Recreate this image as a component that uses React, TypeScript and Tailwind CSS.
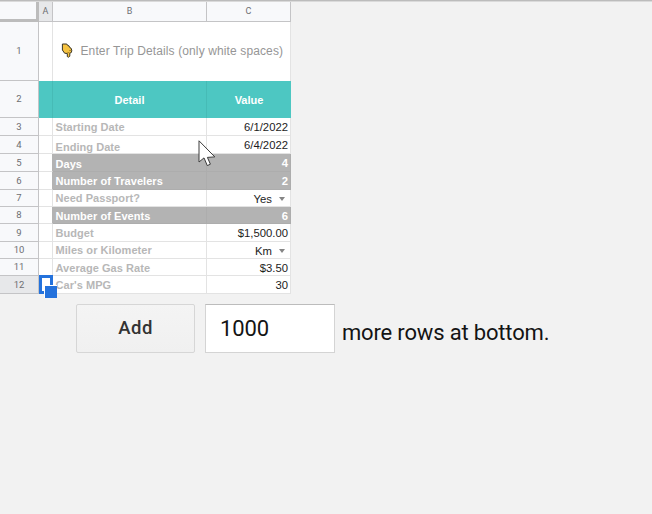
import { clsx } from 'clsx';

type Kind = 'plain' | 'band' | 'select';
interface RowData {
  n: number;
  label: string;
  value: string;
  kind: Kind;
  height: string;
  labelPad?: string;
}

const rows: RowData[] = [
  { n: 3, label: 'Starting Date', value: '6/1/2022', kind: 'plain', height: 'h-[18px]' },
  { n: 4, label: 'Ending Date', value: '6/4/2022', kind: 'plain', height: 'h-[18px]', labelPad: 'pt-[5px]' },
  { n: 5, label: 'Days', value: '4', kind: 'band', height: 'h-[18px]', labelPad: 'pt-[3px]' },
  { n: 6, label: 'Number of Travelers', value: '2', kind: 'band', height: 'h-[18px]' },
  { n: 7, label: 'Need Passport?', value: 'Yes', kind: 'select', height: 'h-[17px]' },
  { n: 8, label: 'Number of Events', value: '6', kind: 'band', height: 'h-[17px]', labelPad: 'pt-[3px]' },
  { n: 9, label: 'Budget', value: '$1,500.00', kind: 'plain', height: 'h-[18px]' },
  { n: 10, label: 'Miles or Kilometer', value: 'Km', kind: 'select', height: 'h-[17px]' },
  { n: 11, label: 'Average Gas Rate', value: '$3.50', kind: 'plain', height: 'h-[17px]', labelPad: 'pt-[2px]' },
  { n: 12, label: "Car's MPG", value: '30', kind: 'plain', height: 'h-[18px]' },
];

function RowNumber({ n, active }: { n: number; active?: boolean }) {
  return (
    <div
      className={clsx(
        'flex w-[39px] shrink-0 items-center justify-center border-r border-b border-[#c4c4c6] text-[9.5px] leading-none text-[#6d6e72]',
        active ? 'bg-[#e7e8ea]' : 'bg-[#f8f9fb]',
      )}
      style={{ fontFamily: 'Roboto, sans-serif' }}
    >
      {n}
    </div>
  );
}

function PointingHand() {
  return (
    <svg width="12" height="16" viewBox="0 0 12 16" className="shrink-0">
      <path
        d="M1.4 1 5.8 1 6.8 2.6 8 2.8 8.6 4.4 9.9 5 10.8 7.2 10.4 9.4 8.8 10.2V13.2L7.6 14.2 6.3 13.6V10.5L3.6 10.2 1.4 7Z"
        fill="#f6c341"
        stroke="#3a3526"
        strokeWidth="1"
        strokeLinejoin="round"
      />
      <path d="M6.4 9.4 8.6 9.8M8.2 7.6 10 7.4" stroke="#8b651d" strokeWidth=".7" fill="none" />
    </svg>
  );
}

function SheetRow({ row }: { row: RowData }) {
  const band = row.kind === 'band';
  return (
    <div className={clsx('flex', row.height)}>
      <RowNumber n={row.n} active={row.n === 12} />
      <div
        className={clsx(
          'relative w-[14px] shrink-0 border-r border-b bg-white',
          band ? 'border-r-[#b3b3b3] border-b-[#e3e3e3]' : 'border-[#e3e3e3]',
        )}
      >
        {row.n === 12 && (
          <>
            <div className="absolute -top-px left-0 h-[19px] w-[14px] border-[3px] border-[#2472dc]" />
            <div className="absolute top-[9px] left-[5px] z-10 h-[13px] w-[13px] border-t border-l border-white bg-[#2472dc]" />
          </>
        )}
      </div>
      <div
        className={clsx(
          'flex w-[154px] shrink-0 items-center border-r border-b pl-[2.5px] text-[11px] leading-none font-bold tracking-[0.05px] whitespace-nowrap',
          row.labelPad ?? 'pt-px',
          band ? 'border-[#adadad] bg-[#b3b3b3] text-white' : 'border-[#e3e3e3] bg-white text-[#b7b7b7]',
        )}
      >
        <span>{row.label}</span>
      </div>
      <div
        className={clsx(
          'flex w-[84px] shrink-0 items-center justify-end border-r border-b pt-[3px] text-[11.3px] leading-none',
          band ? 'border-[#adadad] bg-[#b3b3b3] font-bold text-white' : 'border-[#e3e3e3] bg-white text-[#1c1c1c]',
          row.kind === 'select' ? 'gap-[7px] pr-[5px]' : 'pr-[2px]',
        )}
      >
        <span>{row.value}</span>
        {row.kind === 'select' && (
          <span className="mb-[2px] h-0 w-0 border-x-[3.5px] border-t-4 border-x-transparent border-t-[#858585]" />
        )}
      </div>
    </div>
  );
}

export default function App() {
  return (
    <main
      className="relative h-[514px] w-[652px] overflow-hidden border-t border-[#bcbcbc] bg-[#f2f2f2]"
      style={{ fontFamily: '"Liberation Sans", Arial, sans-serif' }}
    >
      <div className="h-px bg-[#dadada]" />
      <section className="w-[291px]">
        <div className="flex h-5 text-[9px] leading-none text-[#6d6e72]" style={{ fontFamily: 'Roboto, sans-serif' }}>
          <div className="w-[39px] shrink-0 border-r-[3px] border-b-[3px] border-[#bcbcbc] bg-[#f8f9fb]" />
          <div className="flex w-[14px] shrink-0 items-center justify-center border-r border-b border-[#c4c4c6] bg-[#e7e8ea]">A</div>
          <div className="flex w-[154px] shrink-0 items-center justify-center border-r border-b border-[#c4c4c6] bg-[#f8f9fb]">B</div>
          <div className="flex w-[84px] shrink-0 items-center justify-center border-r border-b border-[#c4c4c6] bg-[#f8f9fb]">C</div>
        </div>
        <div className="flex h-[59px]">
          <RowNumber n={1} />
          <div className="w-[14px] shrink-0 border-r border-[#e3e3e3] bg-white" />
          <div className="flex w-[238px] items-center border-r border-[#e3e3e3] bg-white pb-[2px] pl-[8px] text-[12px] text-[#969696]">
            <PointingHand />
            <span className="pl-[7.5px] tracking-[0.12px] whitespace-nowrap">Enter Trip Details (only white spaces)</span>
          </div>
        </div>
        <div className="flex h-[37px] text-[11px] font-bold text-white">
          <div className="flex font-normal">
            <RowNumber n={2} />
          </div>
          <div className="w-[14px] shrink-0 border-r border-[#46bbb6] bg-[#4dc7c2]" />
          <div className="flex w-[154px] shrink-0 items-center justify-center border-r border-[#46bbb6] bg-[#4dc7c2] pt-px">Detail</div>
          <div className="flex w-[84px] shrink-0 items-center justify-center bg-[#4dc7c2] pt-px">Value</div>
        </div>
        {rows.map((row) => (
          <SheetRow key={row.n} row={row} />
        ))}
      </section>
      <div className="flex pt-[10px] pl-[76px]" style={{ fontFamily: 'Roboto, sans-serif' }}>
        <button className="h-[49px] w-[119px] rounded-[2px] border border-[#d6d6d6] bg-linear-to-b from-[#f4f4f4] to-[#f0f0f0] pt-px text-[18.5px] font-medium tracking-[0.5px] text-[#333]">
          Add
        </button>
        <div className="ml-[10px] flex h-[49px] w-[130px] items-center border border-t-[#bcbcbc] border-r-[#d4d4d4] border-b-[#d4d4d4] border-l-[#d4d4d4] bg-white pl-[14px] text-[22px] tracking-[-0.1px] text-[#141414]">
          1000
        </div>
        <span className="pt-[12px] pl-[7px] text-[22px] tracking-[-0.17px] whitespace-nowrap text-[#141414]">more rows at bottom.</span>
      </div>
      <svg className="absolute top-[138px] left-[198px]" width="19" height="28" viewBox="0 0 19 28">
        <path
          d="M1 1.8V23L6 18.9 9.3 26.6 12.4 25.2 9.4 18.4 16.8 17.9Z"
          fill="#fff"
          stroke="#3c3c3c"
          strokeWidth="1"
        />
      </svg>
    </main>
  );
}
